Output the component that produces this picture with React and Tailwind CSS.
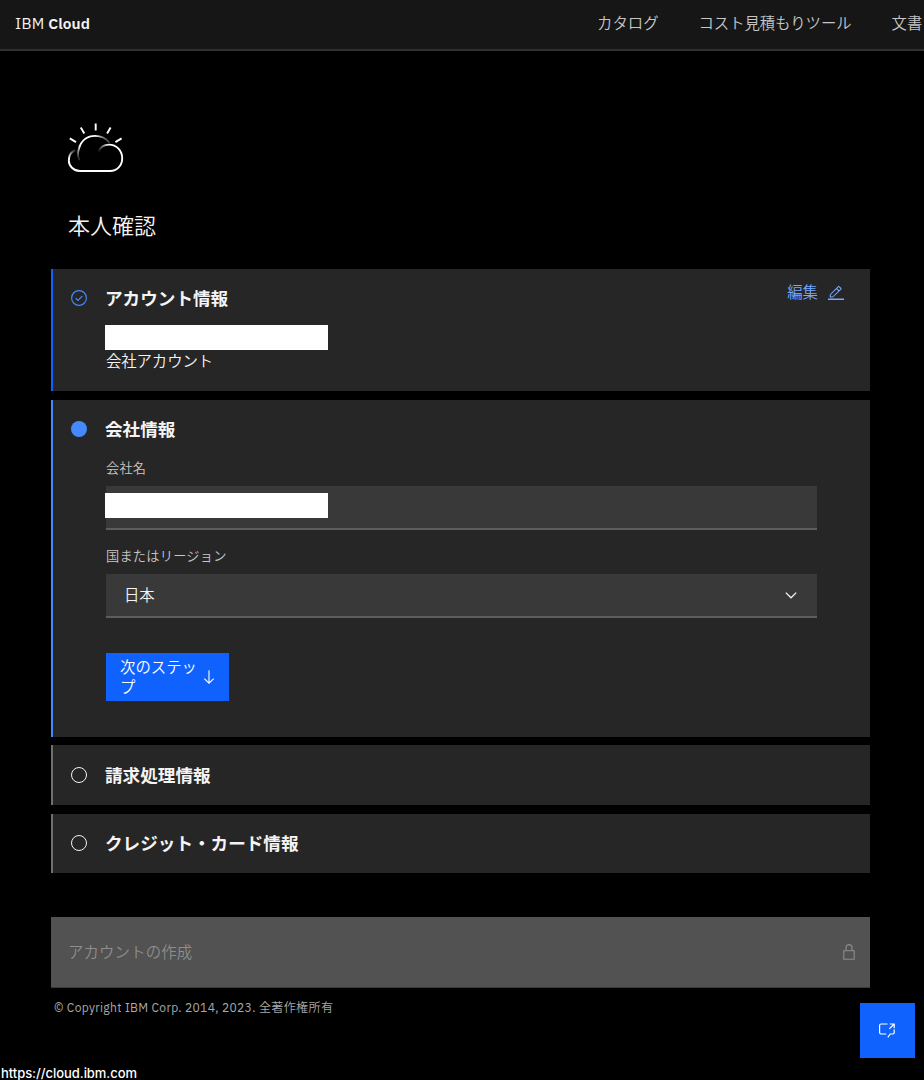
import React from 'react';

function CloudLogo() {
  return (
    <svg className="block h-[52px] w-[58px]" viewBox="0 0 58 52" fill="none" stroke="#fff" strokeWidth="1.9">
      <defs>
        <linearGradient id="sun" gradientUnits="userSpaceOnUse" x1="12" y1="40" x2="43" y2="20">
          <stop offset="0" stopColor="#fff" stopOpacity="0" />
          <stop offset="0.25" stopColor="#fff" />
          <stop offset="0.75" stopColor="#fff" />
          <stop offset="1" stopColor="#fff" stopOpacity="0.2" />
        </linearGradient>
        <linearGradient id="right" gradientUnits="userSpaceOnUse" x1="31" y1="30" x2="43" y2="25">
          <stop offset="0" stopColor="#fff" stopOpacity="0" />
          <stop offset="1" stopColor="#fff" />
        </linearGradient>
        <linearGradient id="left" gradientUnits="userSpaceOnUse" x1="9" y1="28" x2="5" y2="37">
          <stop offset="0" stopColor="#fff" stopOpacity="0.1" />
          <stop offset="1" stopColor="#fff" />
        </linearGradient>
      </defs>
      <path d="M28.7 1.4v7.2M13.8 5.4l3.5 6M43.6 5.4l-3.5 6M2.8 16.4l6.2 3.7M54.6 16.4l-6.2 3.7" />
      <path d="M12.3 38.5C10.4 34.5 10.8 30 11.8 27 14.2 18.5 20.5 13.9 28.4 13.9c5.8 0 10.7 2.5 14 6.6" stroke="url(#sun)" />
      <path d="M31 30c2-4.5 6-7.4 11-7.4" stroke="url(#right)" />
      <path d="M42 22.6c7.7 0 13.2 6.3 13.2 13.7S50 49 43 49H13C6.5 49 1.8 44 1.8 38.2" />
      <path d="M1.8 38.4C1.8 33.5 4 29.8 8.4 28" stroke="url(#left)" />
    </svg>
  );
}

function CheckOutline() {
  return (
    <svg className="block size-4" viewBox="0 0 16 16" fill="none" stroke="#4589ff">
      <circle cx="8" cy="8" r="7.4" strokeWidth="1.15" />
      <path d="M4.7 8.3 7 10.5l4.3-4.4" strokeWidth="1.2" />
    </svg>
  );
}

function EditIcon() {
  return (
    <svg className="block size-4" viewBox="0 0 32 32" fill="#78a9ff">
      <path d="M0 27.2h32v3H0zM26.6 9a2 2 0 0 0 0-2.8L22.8 2.4a2 2 0 0 0-2.8 0L3.5 18.9V25h6.1zM21.4 3.9 25.1 7.6 22.1 10.6 18.4 6.9zM5.6 22.9v-3.2L16.9 8.4l3.7 3.7L9.3 22.9z" fillRule="evenodd" />
    </svg>
  );
}

function Marker({ state }) {
  return (
    <div className="flex w-4 shrink-0 items-center">
      {state === 'done' && <CheckOutline />}
      {state === 'current' && <div className="size-4 rounded-full bg-[#4589ff]" />}
      {state === 'todo' && <div className="size-4 rounded-full border border-[#f4f4f4]" />}
    </div>
  );
}

function StepTitle({ state, children }) {
  return (
    <div className="flex h-6 items-center gap-[18px]">
      <Marker state={state} />
      <h2 className="pt-px text-[17.6px] leading-6 font-bold whitespace-nowrap">{children}</h2>
    </div>
  );
}

const Redacted = () => <div className="h-[25px] w-[223px] bg-white" />;

export default function App() {
  return (
    <div className="flex h-[1080px] w-[924px] flex-col overflow-hidden bg-black font-['IBM_Plex_Sans','Noto_Sans_CJK_JP',sans-serif] font-[350] text-[#f4f4f4]">
      <header className="flex h-[51px] shrink-0 items-center border-b-2 border-[#303030] bg-[#161616] pb-[3px] pl-[15px]">
        <div className="w-[582px] shrink-0 font-['IBM_Plex_Sans','Roboto',sans-serif] text-[15.4px] leading-5 font-normal whitespace-nowrap">
          <span className="tracking-[0.3px]">IBM</span> <span className="font-semibold tracking-[0.1px]">Cloud</span>
        </div>
        <nav className="flex gap-[40px] text-[15.4px] leading-5 whitespace-nowrap text-[#c6c6c6]">
          <a>カタログ</a>
          <a className="tracking-[-0.1px]">コスト見積もりツール</a>
          <a>文書</a>
        </nav>
      </header>

      <main className="ml-[51px] flex w-[819px] flex-col">
        <div className="mt-[71px] ml-4">
          <CloudLogo />
        </div>
        <h1 className="mt-[36px] ml-[17px] text-[22px] leading-8">本人確認</h1>

        <section className="mt-[27px] flex h-[122px] justify-between border-l-2 border-[#0f62fe] bg-[#262626] pt-[17px] pl-[18px]">
          <div>
            <StepTitle state="done">アカウント情報</StepTitle>
            <div className="mt-[15px] ml-[34px]">
              <Redacted />
              <p className="ml-px text-[15.4px] leading-[22px] tracking-[-0.1px]">会社アカウント</p>
            </div>
          </div>
          <button className="mr-[26px] flex h-[14px] items-center gap-[10px] text-[15.4px] text-[#78a9ff]">
            編集
            <EditIcon />
          </button>
        </section>

        <section className="mt-[9px] h-[337px] border-l-2 border-[#4589ff] bg-[#262626] pt-[17px] pl-[18px]">
          <StepTitle state="current">会社情報</StepTitle>
          <div className="ml-[35px] flex w-[711px] flex-col items-start">
            <label className="mt-[17px] text-[13.2px] leading-5 tracking-[0.25px] text-[#c6c6c6]">会社名</label>
            <div className="mt-[8px] h-[44px] w-full border-b-2 border-[#5d5d5d] bg-[#393939] pt-[7px]">
              <div className="-ml-px">
                <Redacted />
              </div>
            </div>
            <label className="mt-4 text-[13.2px] leading-5 tracking-[0.25px] text-[#c6c6c6]">国またはリージョン</label>
            <div className="mt-[8px] flex h-[44px] w-full items-center justify-between border-b-2 border-[#5d5d5d] bg-[#393939] pr-[20px] pl-[18px] text-[15.4px]">
              <span className="pt-px tracking-[-0.2px]">日本</span>
              <svg className="block h-3 w-3" viewBox="0 0 12 12" fill="none" stroke="#f4f4f4" strokeWidth="1.3">
                <path d="m.8 3.6 5.2 5.2 5.2-5.2" />
              </svg>
            </div>
            <button className="mt-[35px] flex h-12 w-[123px] items-center justify-between bg-[#0f62fe] pr-[14px] pl-[14px] text-left text-[15.4px] leading-[19.8px] text-white">
              <span className="-mr-1 w-[80px] pt-px">次のステップ</span>
              <svg className="block h-4 w-3" viewBox="0 0 12 16" fill="none" stroke="#fff" strokeWidth="1.1">
                <path d="M6 1.2v13M1.3 9.7 6 14.2l4.7-4.5" />
              </svg>
            </button>
          </div>
        </section>

        <section className="mt-[8px] flex h-[60px] items-center border-l-2 border-[#6f6f6f] bg-[#262626] pl-[18px]">
          <StepTitle state="todo">請求処理情報</StepTitle>
        </section>
        <section className="mt-[9px] flex h-[59px] items-center border-l-2 border-[#6f6f6f] bg-[#262626] pb-px pl-[18px]">
          <StepTitle state="todo">クレジット・カード情報</StepTitle>
        </section>

        <button className="mt-[44px] flex h-[71px] w-full items-center justify-between border-b border-[#393939] bg-[#525252] pr-[15px] pl-[17px] text-[15.4px] text-[#8d8d8d]">
          <span className="pt-px tracking-[0.15px]">アカウントの作成</span>
          <svg className="block h-4 w-3" viewBox="0 0 12 16" fill="none" stroke="#8d8d8d" strokeWidth="1.1">
            <path d="M.8 6.8h10.4v8.4H.8zM3 6.8V3.6a3 3 0 0 1 6 0v3.2" />
          </svg>
        </button>
        <p className="mt-[10px] ml-[3px] font-['IBM_Plex_Sans','Roboto','Noto_Sans_CJK_JP',sans-serif] text-[12.1px] leading-5 font-normal tracking-[0.3px] whitespace-nowrap text-[#a8a8a8]">
          © Copyright IBM Corp. 2014, 2023. <span className="font-[350]">全著作権所有</span>
        </p>
      </main>

      <button className="absolute top-[1003px] left-[860px] flex size-[55px] items-center justify-center bg-[#0f62fe] pr-[2px] pb-px">
        <svg className="block h-4 w-[18px]" viewBox="0 0 18 16" fill="none" stroke="#fff" strokeWidth="1.2">
          <path d="M9.5 2H3Q1.6 2 1.6 3.4v7.2Q1.6 12 3 12h5.3M16.2 7.5v3.1q0 1.4-1.4 1.4h-2.6l-2.4 3.4M11.8 2h4.4v4.3M16.2 2l-4.9 4.9" />
        </svg>
      </button>
      <div className="absolute top-[1065px] left-px font-['Inter','Roboto',sans-serif] text-[13px] leading-[17px] font-medium tracking-[-0.05px] whitespace-nowrap text-white">
        https://cloud.ibm.com
      </div>
    </div>
  );
}
